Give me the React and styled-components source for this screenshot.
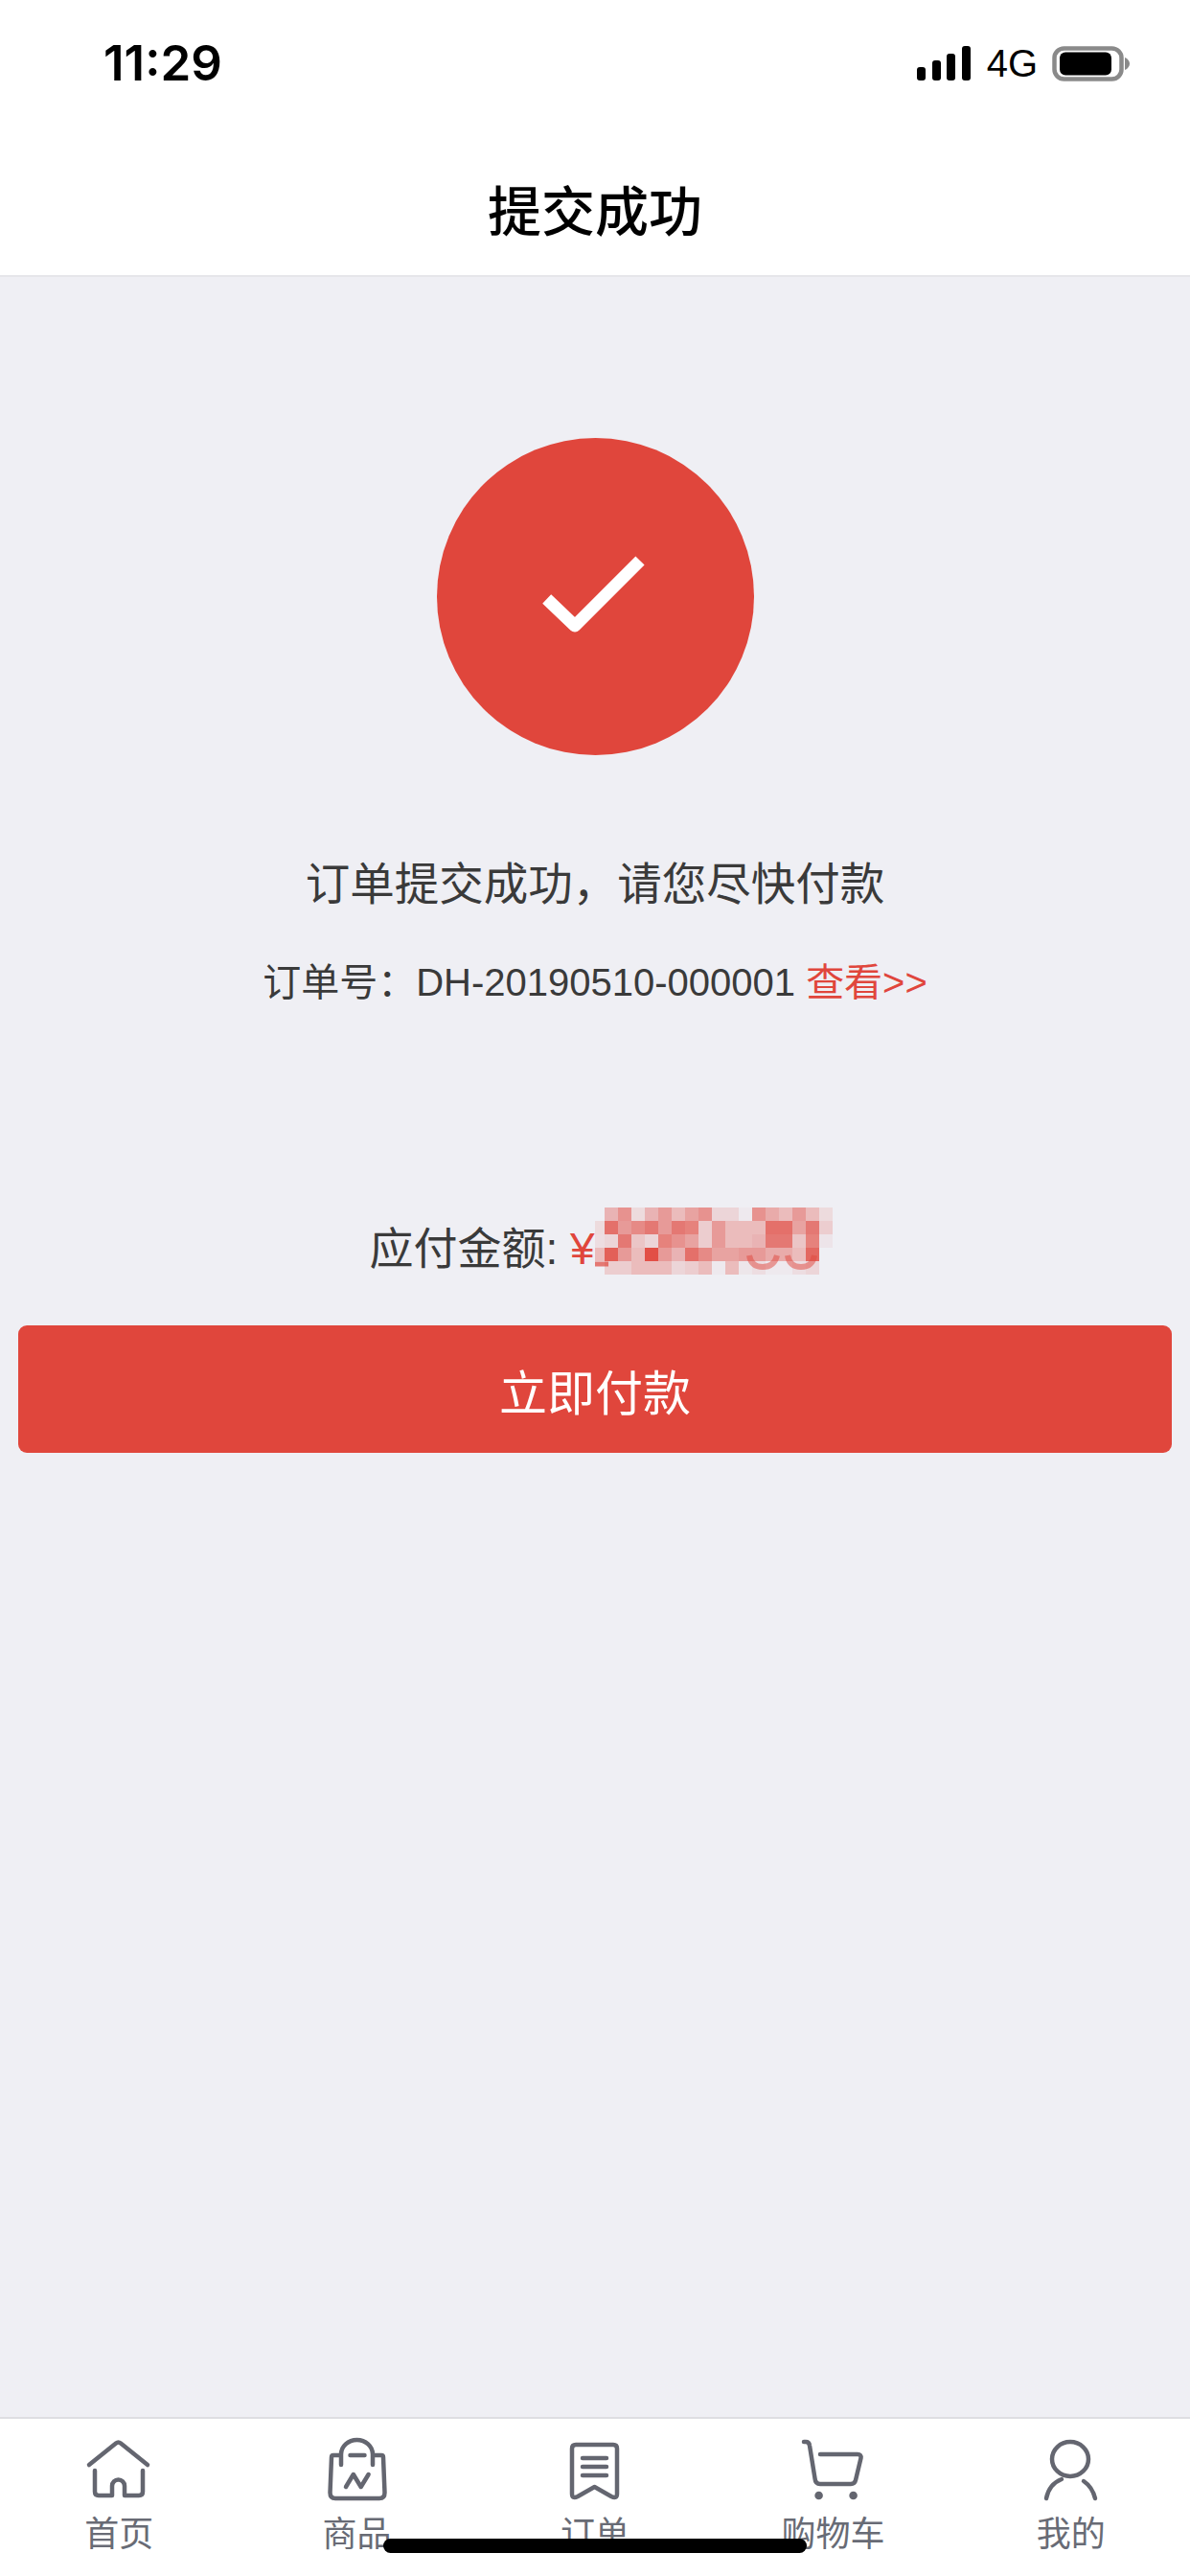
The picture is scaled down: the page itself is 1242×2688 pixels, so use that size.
// App.jsx
import React from 'react'
import styled, { createGlobalStyle } from 'styled-components'

const RED = '#e0463c'
const ICON = '#646670'

const GlobalStyle = createGlobalStyle`
  html, body {
    margin: 0;
    padding: 0;
    background: #efeff4;
  }
  * {
    box-sizing: border-box;
  }
`

const Page = styled.div`
  position: relative;
  width: 1242px;
  height: 2688px;
  display: flex;
  flex-direction: column;
  overflow: hidden;
  background: #efeff4;
  font-family: 'Liberation Sans', 'Noto Sans CJK SC', sans-serif;
  color: #3a3a3a;
`

const StatusBar = styled.div`
  height: 146px;
  padding: 36px 63px 0 108px;
  display: flex;
  justify-content: space-between;
  align-items: flex-start;
  background: #fff;
  color: #000;
`

const Time = styled.span`
  font-family: Inter, 'Liberation Sans', sans-serif;
  font-size: 51px;
  font-weight: 600;
  line-height: 60px;
`

const StatusIcons = styled.div`
  height: 60px;
  display: flex;
  align-items: center;
`

const Carrier = styled.span`
  font-size: 40px;
  line-height: 60px;
  margin: 0 15px 0 17px;
`

const NavBar = styled.header`
  height: 143px;
  display: flex;
  align-items: center;
  justify-content: center;
  background: #fff;
  border-bottom: 2px solid #e6e6ea;
`

const NavTitle = styled.h1`
  margin: 0;
  font-size: 56px;
  font-weight: 500;
  color: #000;
`

const Main = styled.main`
  flex: 1;
  display: flex;
  flex-direction: column;
  align-items: center;
  padding-top: 168px;
`

const SuccessCircle = styled.div`
  width: 331px;
  height: 331px;
  border-radius: 50%;
  background: ${RED};
`

const Message = styled.p`
  margin: 105px 0 0;
  font-size: 46.500px;
  line-height: 60px;
`

const OrderLine = styled.p`
  margin: 42px 0 0;
  font-size: 40px;
  line-height: 60px;
`

const RedText = styled.span`
  color: ${RED};
`

const AmountRow = styled.div`
  margin-top: 208px;
  height: 80px;
  padding-left: 12px;
  display: flex;
  font-size: 46px;
  line-height: 80px;
  white-space: pre;
`

const Mosaic = styled.svg`
  margin-top: -3px;
  display: block;
`

const PayButton = styled.button`
  margin-top: 40px;
  width: 1204px;
  height: 133px;
  border: none;
  border-radius: 9px;
  background: ${RED};
  color: #fff;
  font-family: inherit;
  font-size: 50px;
`

const TabBar = styled.nav`
  height: 166px;
  padding-top: 18px;
  display: grid;
  grid-template-columns: repeat(5, 1fr);
  align-items: start;
  background: #fff;
  border-top: 2px solid #dedee2;
`

const Tab = styled.div`
  display: flex;
  flex-direction: column;
  align-items: center;
`

const TabLabel = styled.span`
  margin-top: 13px;
  font-size: 36px;
  line-height: 40px;
  color: #686b75;
`

const HomeIndicator = styled.div`
  position: absolute;
  left: 400px;
  top: 2649px;
  width: 442px;
  height: 15px;
  border-radius: 8px;
  background: #000;
`

// opacity of each mosaic block, rows of 14px cells
const mosaicRows = [
  [0, 0.35, 0.55, 0.12, 0.35, 0.5, 0.3, 0.45, 0.55, 0.15, 0.15, 0.03, 0.55, 0.4, 0.3, 0.5, 0.3, 0.12],
  [0.12, 0.75, 0.5, 0.6, 0.7, 0.5, 0.7, 0.65, 0.2, 0.5, 0.3, 0.3, 0.3, 0.75, 0.75, 0.45, 0.7, 0.2],
  [0.1, 0.15, 0.7, 0.25, 0.15, 0.65, 0.55, 0.45, 0.2, 0.5, 0.3, 0.3, 0.35, 0.7, 0.7, 0.25, 0.65, 0.06],
  [0.3, 0.85, 0.5, 0.3, 0.95, 0.5, 0.35, 0.75, 0.6, 0.45, 0.45, 0.5, 0.5, 0.4, 0.4, 0.3, 0.8, 0],
  [0, 0.2, 0.2, 0.3, 0.3, 0.3, 0.15, 0.2, 0.3, 0.03, 0.3, 0.05, 0.1, 0.03, 0.03, 0.1, 0.15, 0],
]

const MosaicBlur = () => (
  <Mosaic width='248' height='80' viewBox='0 0 248 80'>
    {mosaicRows.map((row, r) =>
      row.map((alpha, c) =>
        alpha > 0 ? (
          <rect
            key={`${r}-${c}`}
            x={c === 0 ? 0 : 10 + (c - 1) * 14}
            y={r * 14}
            width={c === 0 ? 10 : 14}
            height='14'
            fill={RED}
            fillOpacity={alpha}
          />
        ) : null
      )
    )}
    <path d='M161 50q2 12 14 12t15-12M201 50q2 12 14 12t14-12' fill='none' stroke={RED} strokeOpacity='0.5' strokeWidth='6' />
    <path d='M0 59h14' stroke={RED} strokeOpacity='0.7' strokeWidth='5' />
  </Mosaic>
)

const SignalIcon = () => (
  <svg width='56' height='36' viewBox='0 0 56 36'>
    <rect x='0' y='22' width='9' height='14' rx='3' fill='#000' />
    <rect x='16' y='15' width='9' height='21' rx='3' fill='#000' />
    <rect x='31' y='8' width='9' height='28' rx='3' fill='#000' />
    <rect x='47' y='0' width='9' height='36' rx='3' fill='#000' />
  </svg>
)

const BatteryIcon = () => (
  <svg width='81' height='37' viewBox='0 0 81 37'>
    <rect x='2.500' y='2.500' width='70' height='32' rx='10' fill='none' stroke='#8a8a8a' strokeWidth='4.500' />
    <rect x='8' y='6.500' width='54' height='24' rx='6' fill='#000' />
    <path d='M76 12c3 1 5 4 5 6.500s-2 5.500-5 6.500z' fill='#8a8a8a' />
  </svg>
)

const TabIcon = ({ children }) => (
  <svg
    width='70'
    height='70'
    viewBox='0 0 70 70'
    fill='none'
    stroke={ICON}
    strokeWidth='4.500'
    strokeLinecap='round'
    strokeLinejoin='round'
  >
    {children}
  </svg>
)

const tabs = [
  {
    label: '首页',
    icon: (
      <path d='M4 30L32 7.500Q34.500 5.500 37 7.500L65 30M10 36V58Q10 62 14 62H28V52A6.500 6.500 0 0 1 41 52V62H56Q60 62 60 58V36' />
    ),
  },
  {
    label: '商品',
    icon: (
      <path d='M18 20H10Q8 20 8 22L6.500 59Q6.500 65 12 65H58Q63.500 65 63.500 59L62 22Q62 20 60 20H52M18 30V19A16.500 15 0 0 1 51 19V30M27.500 20H42.500M23 53L30.800 40L38.700 53L46.600 40' />
    ),
  },
  {
    label: '订单',
    icon: (
      <path d='M15 9H54Q58 9 58 13V60Q58 66 52 63L34.500 53L17 63Q11 66 11 60V13Q11 9 15 9ZM22 23H47M22 32H47M22 41H47' />
    ),
  },
  {
    label: '购物车',
    icon: (
      <>
        <path d='M5 6H7Q10.500 6 11 10L16.500 44Q17 50 22 50H54Q58 50 59 46L64.500 23Q65 19 61 19H22' />
        <circle cx='20.600' cy='62' r='4.300' fill={ICON} stroke='none' />
        <circle cx='56.600' cy='62' r='4.300' fill={ICON} stroke='none' />
      </>
    ),
  },
  {
    label: '我的',
    icon: (
      <>
        <ellipse cx='34' cy='24' rx='19' ry='18' />
        <path d='M9 65Q12 50 25 45M48 47Q57 53 60 65' />
      </>
    ),
  },
]

const App = () => {
  return (
    <Page>
      <GlobalStyle />
      <StatusBar>
        <Time>11:29</Time>
        <StatusIcons>
          <SignalIcon />
          <Carrier>4G</Carrier>
          <BatteryIcon />
        </StatusIcons>
      </StatusBar>
      <NavBar>
        <NavTitle>提交成功</NavTitle>
      </NavBar>

      <Main>
        <SuccessCircle>
          <svg width='331' height='331' viewBox='0 0 331 331'>
            <path d='M114.700 168L144 196L212 128' fill='none' stroke='#fff' strokeWidth='13' strokeLinejoin='round' />
          </svg>
        </SuccessCircle>
        <Message>订单提交成功，请您尽快付款</Message>
        <OrderLine>
          订单号：DH-20190510-000001 <RedText>查看&gt;&gt;</RedText>
        </OrderLine>
        <AmountRow>
          应付金额: <RedText>¥</RedText>
          <MosaicBlur />
        </AmountRow>
        <PayButton>立即付款</PayButton>
      </Main>

      <TabBar>
        {tabs.map((tab) => (
          <Tab key={tab.label}>
            <TabIcon>{tab.icon}</TabIcon>
            <TabLabel>{tab.label}</TabLabel>
          </Tab>
        ))}
      </TabBar>
      <HomeIndicator />
    </Page>
  )
}

export default App
